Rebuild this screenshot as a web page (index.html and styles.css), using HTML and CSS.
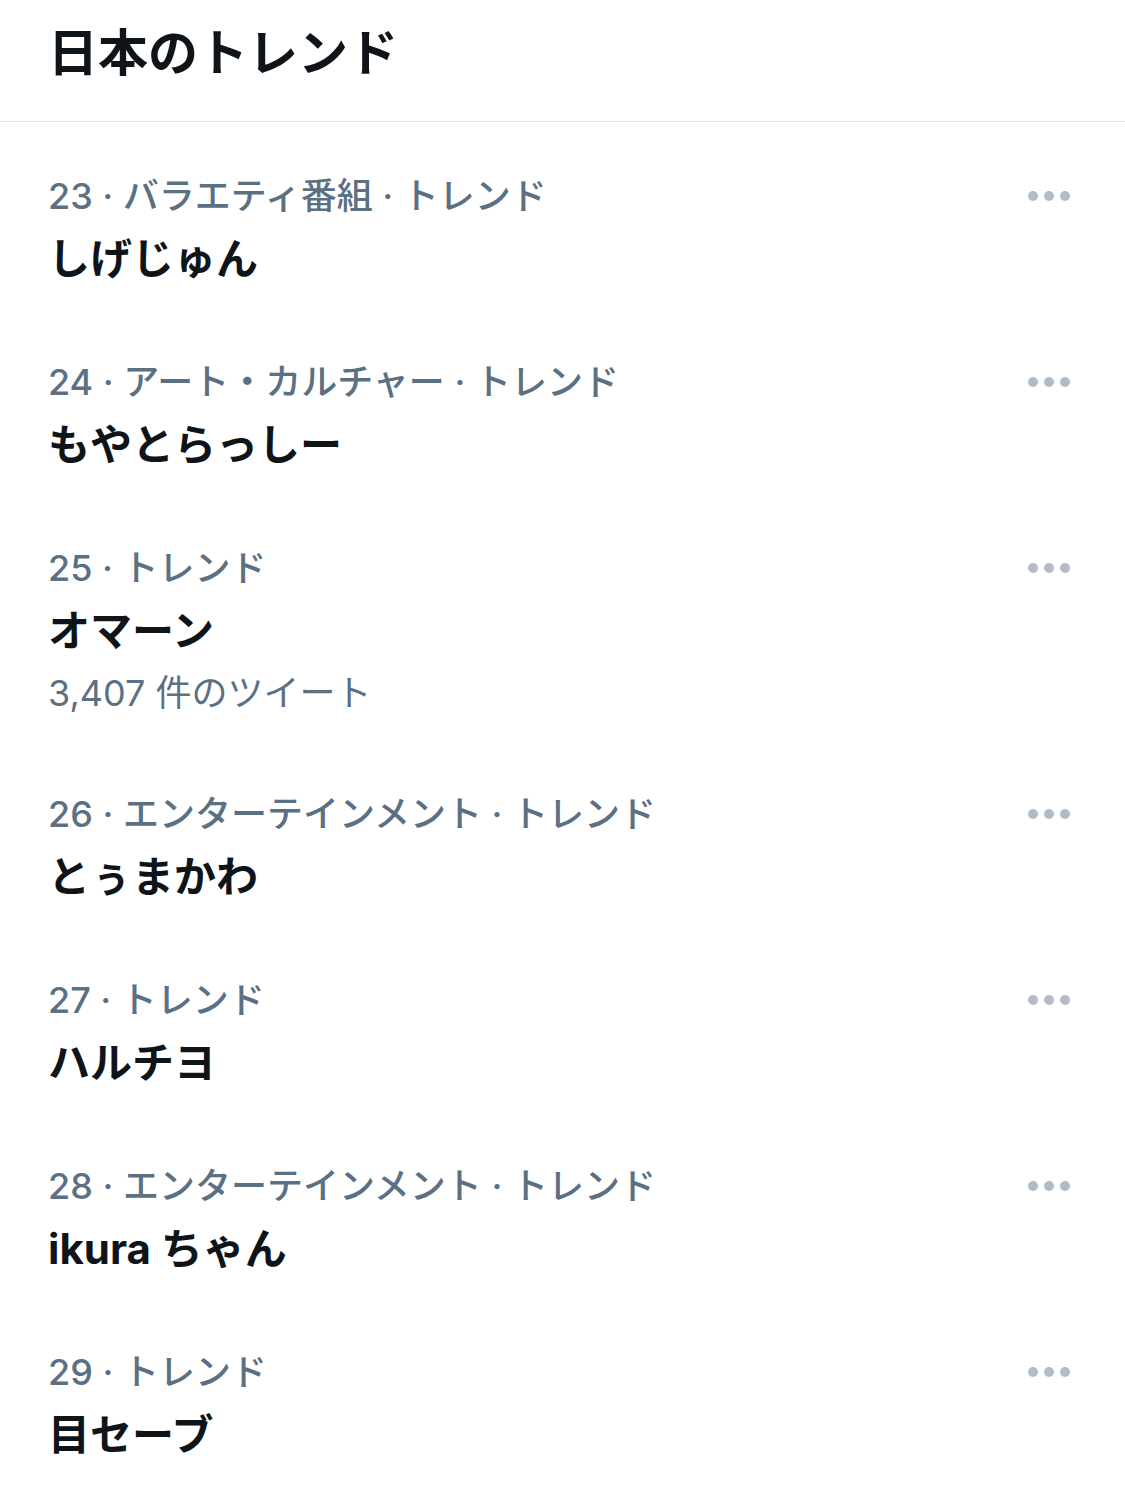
FILE: index.html
```html
<!DOCTYPE html>
<html>
    <head>
        <meta charset="UTF-8">
        <title>日本のトレンド</title>
        <link rel="stylesheet" href="styles.css">
    </head>
    <body>
        <div class="header">日本のトレンド</div>
        <ul class="trends">
            <li class="trend">
                <div class="info">
                    <div class="meta">23 · バラエティ番組 · トレンド</div>
                    <div class="name">しげじゅん</div>
                </div>
                <div class="more"><span></span><span></span><span></span></div>
            </li>
            <li class="trend">
                <div class="info">
                    <div class="meta">24 · アート・カルチャー · トレンド</div>
                    <div class="name">もやとらっしー</div>
                </div>
                <div class="more"><span></span><span></span><span></span></div>
            </li>
            <li class="trend">
                <div class="info">
                    <div class="meta">25 · トレンド</div>
                    <div class="name">オマーン</div>
                    <div class="count">3,407 件のツイート</div>
                </div>
                <div class="more"><span></span><span></span><span></span></div>
            </li>
            <li class="trend">
                <div class="info">
                    <div class="meta">26 · エンターテインメント · トレンド</div>
                    <div class="name">とぅまかわ</div>
                </div>
                <div class="more"><span></span><span></span><span></span></div>
            </li>
            <li class="trend">
                <div class="info">
                    <div class="meta">27 · トレンド</div>
                    <div class="name">ハルチヨ</div>
                </div>
                <div class="more"><span></span><span></span><span></span></div>
            </li>
            <li class="trend">
                <div class="info">
                    <div class="meta">28 · エンターテインメント · トレンド</div>
                    <div class="name">ikura ちゃん</div>
                </div>
                <div class="more"><span></span><span></span><span></span></div>
            </li>
            <li class="trend">
                <div class="info">
                    <div class="meta">29 · トレンド</div>
                    <div class="name">目セーブ</div>
                </div>
                <div class="more"><span></span><span></span><span></span></div>
            </li>
        </ul>
    </body>
</html>
```

FILE: styles.css
```css
* { margin: 0; padding: 0; }
html, body { background: #fff; font-family: "Inter", "Noto Sans CJK JP", sans-serif; color: #0f1419; }
ul, li { list-style-type: none; }

.header { height: 93px; padding: 28px 50px 0 48px; font-size: 50px; line-height: 50px; font-weight: 700; border-bottom: 1px solid #e1e6ea; }

.trends { padding-top: 19px; }
.trend { display: flex; justify-content: space-between; align-items: flex-start; padding: 30px 55px 30px 48px; }
.meta { font-size: 36px; line-height: 50px; font-weight: 500; color: #5b7083; }
.name { font-size: 42px; line-height: 76px; font-weight: 700; }
.count { font-size: 36px; line-height: 48px; margin-bottom: 12px; color: #5b7083; }

.more { display: flex; gap: 6px; height: 50px; align-items: center; }
.more span { width: 10px; height: 10px; border-radius: 50%; background: #b1bcc6; }
```
